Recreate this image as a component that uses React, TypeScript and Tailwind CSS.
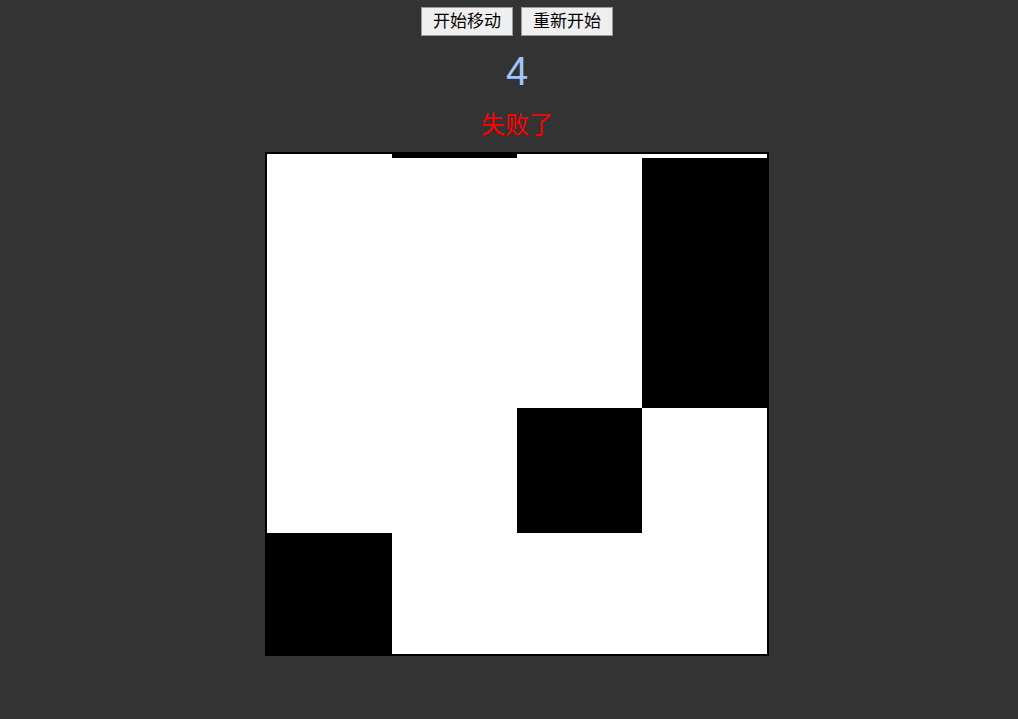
import React from "react";

const rows: number[] = [1, 3, 3, 2, 0];

export default function App() {
  return (
    <div className="min-h-screen w-full bg-[#333333] flex flex-col items-center pl-4" style={{ fontFamily: '"Liberation Sans", "Noto Sans CJK SC", sans-serif' }}>
      <div className="flex gap-2 mt-[7px]">
        <button className="w-[92px] h-[29px] bg-[#efefef] border border-[#9a9a9a] text-black text-[17px] leading-none flex items-center justify-center">开始移动</button>
        <button className="w-[92px] h-[29px] bg-[#efefef] border border-[#9a9a9a] text-black text-[17px] leading-none flex items-center justify-center">重新开始</button>
      </div>
      <div className="h-[69px] flex items-center justify-center text-[#a4c6f3] text-[40px] leading-none">4</div>
      <div className="h-[40px] flex items-center justify-center text-[#ff0000] text-[24px] leading-none">失败了</div>
      <div className="mt-[7px] w-[504px] h-[504px] border-2 border-black bg-white overflow-hidden">
        <div className="mt-[-121px] flex flex-col">
          {rows.map((b, i) => (
            <div key={i} className="flex h-[125px]">
              {[0, 1, 2, 3].map((c) => (
                <div key={c} className={c === b ? "w-[125px] h-[125px] bg-black" : "w-[125px] h-[125px] bg-white"} />
              ))}
            </div>
          ))}
        </div>
      </div>
    </div>
  );
}
